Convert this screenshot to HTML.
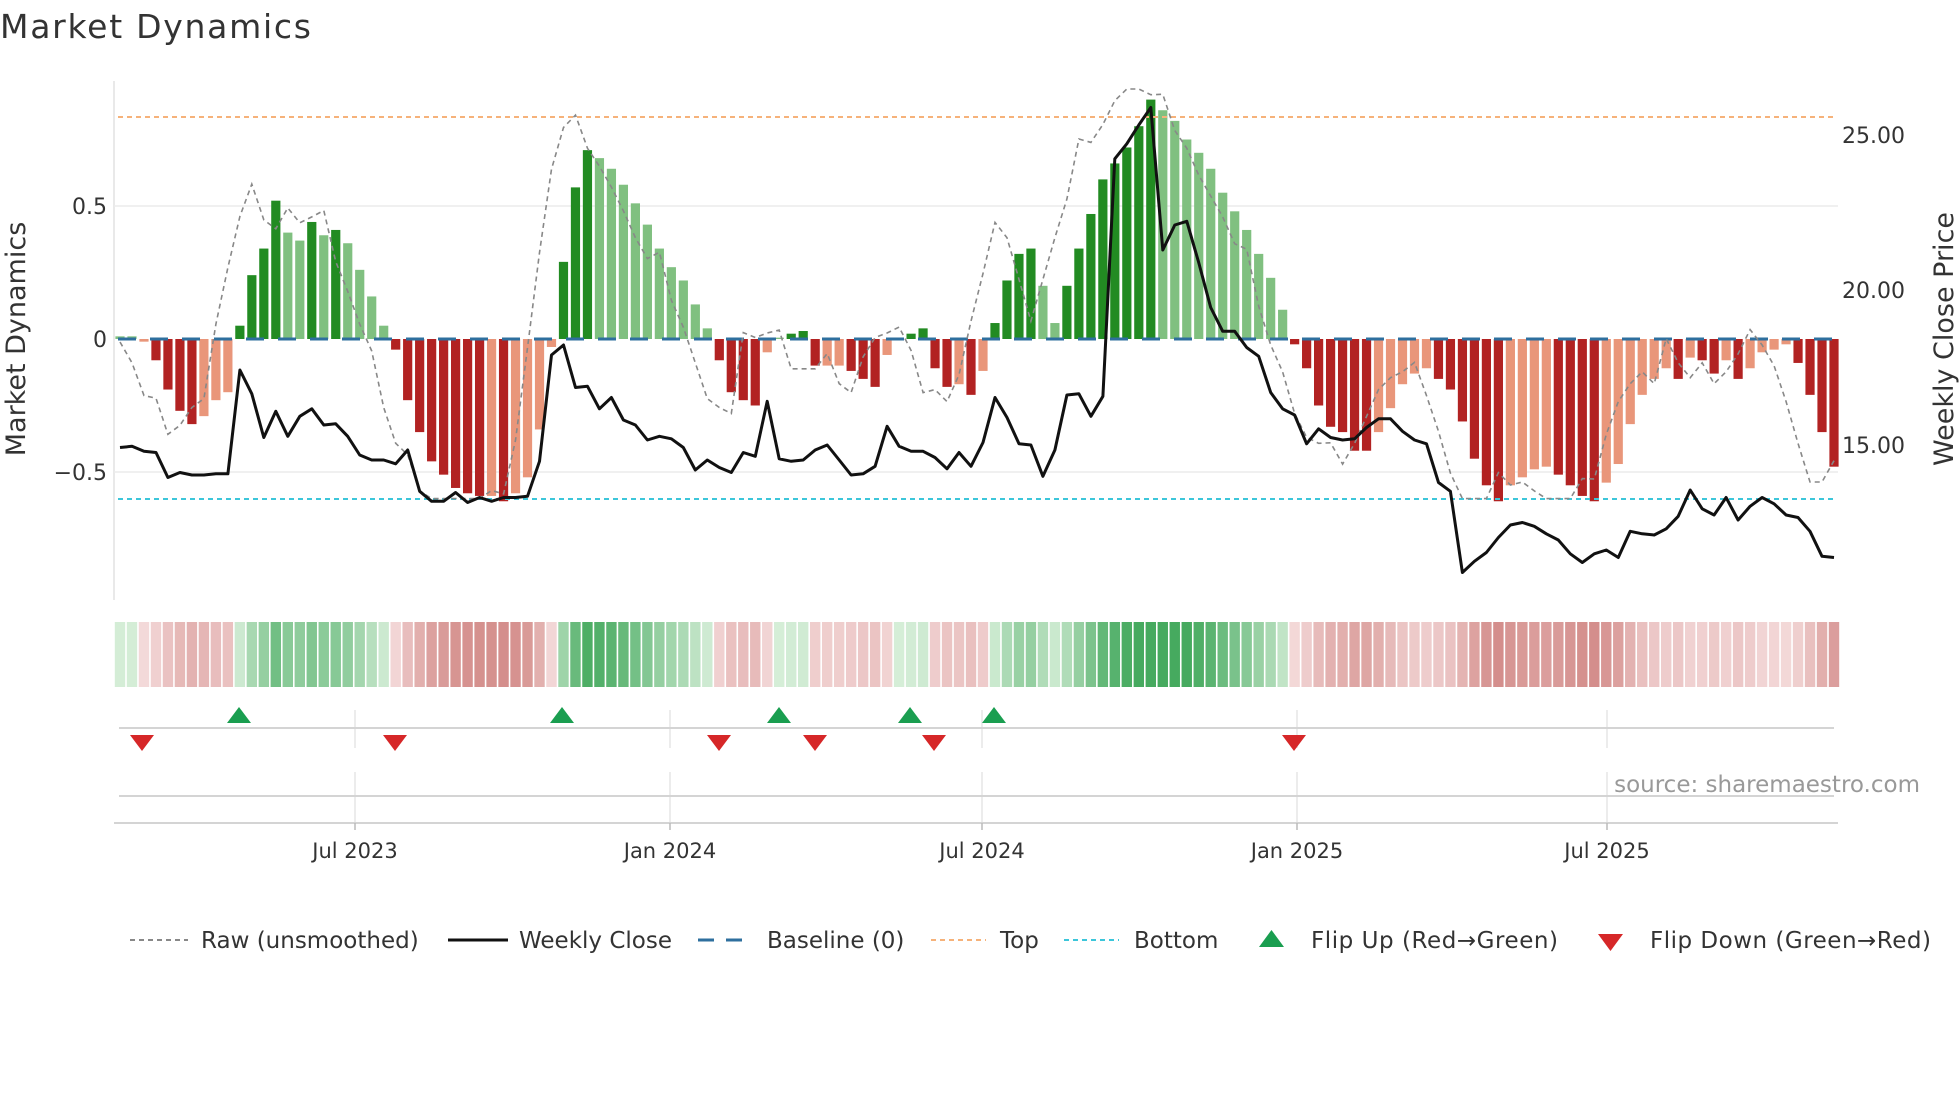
<!DOCTYPE html>
<html><head><meta charset="utf-8"><style>
html,body{margin:0;padding:0;background:#fff;width:1960px;height:1102px;overflow:hidden}
svg{display:block;font-family:"DejaVu Sans","Liberation Sans",sans-serif}
</style></head><body>
<svg id="s" width="1960" height="1102" viewBox="0 0 1960 1102" xmlns="http://www.w3.org/2000/svg">
<text x="0" y="38" font-size="33" fill="#333" textLength="311">Market Dynamics</text>
<line x1="114" y1="81" x2="114" y2="600" stroke="#e2e2e2" stroke-width="1.5"/>
<line x1="114" y1="206" x2="1838" y2="206" stroke="#ececec" stroke-width="1.5"/>
<line x1="114" y1="472" x2="1838" y2="472" stroke="#ececec" stroke-width="1.5"/>
<g font-size="22" fill="#333" text-anchor="end">
<text x="107" y="214">0.5</text><text x="107" y="347">0</text><text x="107" y="480">−0.5</text>
</g>
<g font-size="22" fill="#333">
<text x="1842" y="143">25.00</text><text x="1842" y="298">20.00</text><text x="1842" y="453">15.00</text>
</g>
<text transform="translate(25,339) rotate(-90)" font-size="27" fill="#333" text-anchor="middle">Market Dynamics</text>
<text transform="translate(1953,339) rotate(-90)" font-size="27" fill="#333" text-anchor="middle">Weekly Close Price</text>
<g id="bars"></g>
<line x1="118" y1="339" x2="1834" y2="339" stroke="#2e6f9e" stroke-width="3" stroke-dasharray="18,14"/>
<line x1="118" y1="117" x2="1834" y2="117" stroke="#f6b27a" stroke-width="2" stroke-dasharray="5,4"/>
<line x1="118" y1="499" x2="1834" y2="499" stroke="#3cc6da" stroke-width="2" stroke-dasharray="5,4"/>
<polyline id="raw" fill="none" stroke="#888" stroke-width="1.6" stroke-dasharray="5,4"/>
<polyline id="price" fill="none" stroke="#111" stroke-width="3" stroke-linejoin="round"/>
<g id="heat"></g>
<g stroke="#e6e6e6" stroke-width="1.5">
<line x1="355" y1="710" x2="355" y2="748"/><line x1="670" y1="710" x2="670" y2="748"/><line x1="982" y1="710" x2="982" y2="748"/><line x1="1297" y1="710" x2="1297" y2="748"/><line x1="1607" y1="710" x2="1607" y2="748"/>
<line x1="355" y1="772" x2="355" y2="822"/><line x1="670" y1="772" x2="670" y2="822"/><line x1="982" y1="772" x2="982" y2="822"/><line x1="1297" y1="772" x2="1297" y2="822"/><line x1="1607" y1="772" x2="1607" y2="822"/>
</g>
<line x1="119" y1="728" x2="1834" y2="728" stroke="#d4d4d4" stroke-width="2"/>
<line x1="119" y1="796" x2="1834" y2="796" stroke="#d4d4d4" stroke-width="2"/>
<line x1="114" y1="823" x2="1838" y2="823" stroke="#d4d4d4" stroke-width="2"/>
<g stroke="#bbb" stroke-width="1.5">
<line x1="355" y1="823" x2="355" y2="830"/><line x1="670" y1="823" x2="670" y2="830"/><line x1="982" y1="823" x2="982" y2="830"/><line x1="1297" y1="823" x2="1297" y2="830"/><line x1="1607" y1="823" x2="1607" y2="830"/>
</g>
<g id="mk"></g>
<g font-size="21" fill="#333" text-anchor="middle">
<text x="355" y="858">Jul 2023</text><text x="670" y="858">Jan 2024</text><text x="982" y="858">Jul 2024</text><text x="1297" y="858">Jan 2025</text><text x="1607" y="858">Jul 2025</text>
</g>
<text x="1920" y="792" font-size="23" fill="#999" text-anchor="end">source: sharemaestro.com</text>
<g font-size="23" fill="#333">
<line x1="130" y1="940" x2="188" y2="940" stroke="#888" stroke-width="2" stroke-dasharray="5,4"/>
<text x="201" y="948">Raw (unsmoothed)</text>
<line x1="448" y1="940" x2="508" y2="940" stroke="#111" stroke-width="3"/>
<text x="519" y="948">Weekly Close</text>
<line x1="698" y1="940" x2="752" y2="940" stroke="#2e6f9e" stroke-width="3" stroke-dasharray="16,12"/>
<text x="767" y="948">Baseline (0)</text>
<line x1="931" y1="940" x2="986" y2="940" stroke="#f6b27a" stroke-width="2" stroke-dasharray="5,4"/>
<text x="1000" y="948">Top</text>
<line x1="1064" y1="940" x2="1119" y2="940" stroke="#3cc6da" stroke-width="2" stroke-dasharray="5,4"/>
<text x="1134" y="948">Bottom</text>
<polygon points="1259,947 1284,947 1271.5,930" fill="#1a9e50"/>
<text x="1311" y="948" textLength="247">Flip Up (Red→Green)</text>
<polygon points="1598,934 1623,934 1610.5,951" fill="#d62728"/>
<text x="1650" y="948" textLength="281">Flip Down (Green→Red)</text>
</g>
</svg>
<script>
var V=[[.01,'lg'],[.01,'lg'],[-.01,'lr'],[-.08,'dr'],[-.19,'dr'],[-.27,'dr'],[-.32,'dr'],[-.29,'lr'],[-.23,'lr'],[-.2,'lr'],
[.05,'dg'],[.24,'dg'],[.34,'dg'],[.52,'dg'],[.40,'lg'],[.37,'lg'],[.44,'dg'],[.39,'lg'],[.41,'dg'],[.36,'lg'],[.26,'lg'],[.16,'lg'],[.05,'lg'],
[-.04,'dr'],[-.23,'dr'],[-.35,'dr'],[-.46,'dr'],[-.51,'dr'],[-.56,'dr'],[-.58,'dr'],[-.59,'dr'],[-.59,'lr'],[-.61,'dr'],[-.58,'lr'],[-.52,'lr'],[-.34,'lr'],[-.03,'lr'],
[.29,'dg'],[.57,'dg'],[.71,'dg'],[.68,'lg'],[.64,'lg'],[.58,'lg'],[.51,'lg'],[.43,'lg'],[.34,'lg'],[.27,'lg'],[.22,'lg'],[.13,'lg'],[.04,'lg'],
[-.08,'dr'],[-.2,'dr'],[-.23,'dr'],[-.25,'dr'],[-.05,'lr'],[.005,'lg'],[.02,'dg'],[.03,'dg'],[-.1,'dr'],[-.1,'lr'],[-.1,'lr'],[-.12,'dr'],[-.15,'dr'],[-.18,'dr'],[-.06,'lr'],[.005,'lg'],[.02,'dg'],[.04,'dg'],
[-.11,'dr'],[-.18,'dr'],[-.17,'lr'],[-.21,'dr'],[-.12,'lr'],[.06,'dg'],
[.22,'dg'],[.32,'dg'],[.34,'dg'],[.20,'lg'],[.06,'lg'],[.20,'dg'],[.34,'dg'],[.47,'dg'],[.60,'dg'],[.66,'dg'],[.72,'dg'],[.80,'dg'],[.90,'dg'],[.86,'lg'],[.82,'lg'],[.75,'lg'],[.70,'lg'],[.64,'lg'],[.55,'lg'],[.48,'lg'],[.41,'lg'],[.32,'lg'],[.23,'lg'],[.11,'lg'],
[-.02,'dr'],[-.11,'dr'],[-.25,'dr'],[-.33,'dr'],[-.35,'dr'],[-.42,'dr'],[-.42,'dr'],[-.35,'lr'],[-.26,'lr'],[-.17,'lr'],[-.13,'lr'],[-.11,'lr'],[-.15,'dr'],[-.19,'dr'],[-.31,'dr'],[-.45,'dr'],[-.55,'dr'],[-.61,'dr'],[-.55,'lr'],[-.52,'lr'],[-.49,'lr'],[-.48,'lr'],[-.51,'dr'],[-.55,'dr'],[-.59,'dr'],[-.61,'dr'],[-.54,'lr'],[-.47,'lr'],[-.32,'lr'],[-.21,'lr'],[-.15,'lr'],[-.11,'lr'],[-.15,'dr'],[-.07,'lr'],[-.08,'dr'],[-.13,'dr'],[-.08,'lr'],[-.15,'dr'],[-.11,'lr'],[-.05,'lr'],[-.04,'lr'],[-.02,'lr'],[-.09,'dr'],[-.21,'dr'],[-.35,'dr'],[-.48,'dr']];
var P=[358,357,361,362,382,378,380,380,379,379,296,315,350,329,349,333,327,340,339,349,364,368,368,371,360,393,401,401,394,402,398,401,398,398,397,369,284,276,310,309,327,318,336,340,352,349,351,358,376,368,374,378,362,365,321,367,369,368,360,356,368,380,379,373,341,357,361,361,366,375,362,373,354,318,334,355,356,381,360,316,315,333,317,127,115,100,86,200,180,177,210,246,265,265,278,285,314,327,332,355,343,350,352,351,342,335,335,345,352,355,386,393,458,449,442,430,420,418,421,427,432,443,450,443,440,446,425,427,428,423,413,392,407,412,398,416,405,398,403,412,414,425,445,446];
var N=V.length,x0=120,x1=1834,st=(x1-x0)/(N-1),ns="http://www.w3.org/2000/svg";
var col={dg:'#228b22',lg:'#80c080',dr:'#b22222',lr:'#e9967a'};
function el(t,a,p){var e=document.createElementNS(ns,t);for(var k in a)e.setAttribute(k,a[k]);p.appendChild(e);return e;}
var B=document.getElementById('bars'),H=document.getElementById('heat');
function mix(a,b,t){return 'rgb('+a.map(function(c,i){return Math.round(c+(b[i]-c)*t)}).join(',')+')';}
var raw=[],pr=[];
for(var i=0;i<N;i++){var v=V[i][0],x=x0+i*st,y0=339,h=v*266;
 el('rect',{x:x-4.6,y:h>0?y0-h:y0,width:9.2,height:Math.max(Math.abs(h),1),fill:col[V[i][1]]},B);
 var t=Math.min(Math.abs(v)/0.75,1),c=v>=0?mix([214,238,216],[70,170,95],t):mix([244,218,218],[205,125,122],t);
 el('rect',{x:x-st/2+0.8,y:622,width:st-1.6,height:65,fill:c},H);
 var j=Math.min(N-1,i+2),r=V[j][0]*1.12+(i%7==3?0.08:0);r=Math.max(-0.6,Math.min(0.94,r));
 raw.push(x.toFixed(1)+','+(339-r*266).toFixed(1));
 pr.push(x.toFixed(1)+','+(P[i]*1.25).toFixed(1));}
document.getElementById('raw').setAttribute('points',raw.join(' '));
document.getElementById('price').setAttribute('points',pr.join(' '));
var M=document.getElementById('mk');
[239,562,779,910,994].forEach(function(x){el('polygon',{points:(x-12)+',723 '+(x+12)+',723 '+x+',707',fill:'#1a9e50'},M)});
[142,395,719,815,934,1294].forEach(function(x){el('polygon',{points:(x-12)+',735 '+(x+12)+',735 '+x+',751',fill:'#d62728'},M)});
</script>
</body></html>
